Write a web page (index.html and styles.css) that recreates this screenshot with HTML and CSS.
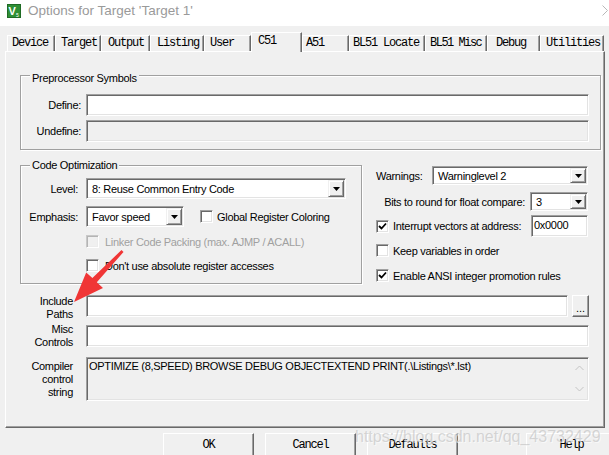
FILE: index.html
```html
<!DOCTYPE html>
<html>
<head>
<meta charset="utf-8">
<title>Options for Target 'Target 1'</title>
<link rel="stylesheet" href="styles.css">
</head>
<body>
<div class="window">
  <div class="titlebar">
    <svg class="app-icon" width="14" height="14" viewBox="0 0 14 14">
      <rect x="0" y="0" width="14" height="14" fill="#2f8f35"/>
      <rect x="0.5" y="0.5" width="13" height="13" fill="none" stroke="#1f6b24"/>
      <text x="1.5" y="11" font-family="Liberation Sans, sans-serif" font-weight="bold" font-size="11" fill="#fff">V</text>
      <text x="9" y="12.5" font-family="Liberation Sans, sans-serif" font-size="5" fill="#fff">5</text>
    </svg>
    <span class="title">Options for Target 'Target 1'</span>
    <svg class="title-chev" width="6" height="11" viewBox="0 0 6 11"><polyline points="0.5,0.5 5.5,5.5 0.5,10.5" fill="none" stroke="#b8b8b8"/></svg>
  </div>

  <div class="tabs">
    <div class="tab t-device">Device</div>
    <div class="tab t-target">Target</div>
    <div class="tab t-output">Output</div>
    <div class="tab t-listing">Listing</div>
    <div class="tab t-user">User</div>
    <div class="tab sel t-c51">C51</div>
    <div class="tab t-a51">A51</div>
    <div class="tab t-bl51l">BL51 Locate</div>
    <div class="tab t-bl51m">BL51 Misc</div>
    <div class="tab t-debug">Debug</div>
    <div class="tab t-util">Utilities</div>
  </div>

  <div class="panel">
    <div class="group g-pre">
      <span class="legend lg-pre">Preprocessor Symbols</span>
      <div class="frow">
        <span class="flabel">Define:</span>
        <div class="edit e-def"></div>
      </div>
      <div class="frow fr-2">
        <span class="flabel">Undefine:</span>
        <div class="edit e-def dis"></div>
      </div>
    </div>

    <div class="mid">
      <div class="group g-opt">
        <span class="legend lg-opt">Code Optimization</span>
        <div class="orow">
          <span class="olabel">Level:</span>
          <div class="combo c-level"><span class="ctext">8: Reuse Common Entry Code</span><span class="cbtn"><svg width="7" height="4" viewBox="0 0 7 4"><polygon points="0,0 7,0 3.5,4" fill="#000"/></svg></span></div>
        </div>
        <div class="orow or-2">
          <span class="olabel">Emphasis:</span>
          <div class="combo c-emph"><span class="ctext">Favor speed</span><span class="cbtn"><svg width="7" height="4" viewBox="0 0 7 4"><polygon points="0,0 7,0 3.5,4" fill="#000"/></svg></span></div>
          <span class="chk chk-grc"></span>
          <span class="clabel">Global Register Coloring</span>
        </div>
        <div class="crow cr-link">
          <span class="chk dis"></span>
          <span class="clabel gray">Linker Code Packing (max. AJMP / ACALL)</span>
        </div>
        <div class="crow cr-dont">
          <span class="chk"></span>
          <span class="clabel">Don't use absolute register accesses</span>
        </div>
      </div>

      <div class="rightcol">
        <div class="rrow rr-warn">
          <span class="wlabel">Warnings:</span>
          <div class="combo c-warn"><span class="ctext">Warninglevel 2</span><span class="cbtn"><svg width="7" height="4" viewBox="0 0 7 4"><polygon points="0,0 7,0 3.5,4" fill="#000"/></svg></span></div>
        </div>
        <div class="rrow rr-bits">
          <span class="blabel2">Bits to round for float compare:</span>
          <div class="combo c-bits"><span class="ctext">3</span><span class="cbtn"><svg width="7" height="4" viewBox="0 0 7 4"><polygon points="0,0 7,0 3.5,4" fill="#000"/></svg></span></div>
        </div>
        <div class="rrow rr-int">
          <span class="chk on"><svg width="9" height="9" viewBox="0 0 9 9"><polyline points="1,4 3.5,6.5 8,1.5" fill="none" stroke="#000" stroke-width="1.8"/></svg></span>
          <span class="clabel">Interrupt vectors at address:</span>
          <div class="edit e-addr">0x0000</div>
        </div>
        <div class="rrow rr-keep">
          <span class="chk"></span>
          <span class="clabel">Keep variables in order</span>
        </div>
        <div class="rrow rr-ansi">
          <span class="chk on"><svg width="9" height="9" viewBox="0 0 9 9"><polyline points="1,4 3.5,6.5 8,1.5" fill="none" stroke="#000" stroke-width="1.8"/></svg></span>
          <span class="clabel">Enable ANSI integer promotion rules</span>
        </div>
      </div>
    </div>

    <div class="brow br-inc">
      <span class="blabel">Include<br>Paths</span>
      <div class="bfield">
        <div class="edit e-inc"></div>
        <div class="dots">...</div>
      </div>
    </div>
    <div class="brow br-misc">
      <span class="blabel">Misc<br>Controls</span>
      <div class="bfield">
        <div class="edit e-misc"></div>
      </div>
    </div>
    <div class="brow br-comp">
      <span class="blabel">Compiler<br>control<br>string</span>
      <div class="bfield">
        <div class="edit e-comp">
          <span class="ctrl-text">OPTIMIZE (8,SPEED) BROWSE DEBUG OBJECTEXTEND PRINT(.\Listings\*.lst)</span>
          <span class="vscroll">
            <svg width="9" height="6" viewBox="0 0 9 6"><polyline points="0.5,5 4.5,1 8.5,5" fill="none" stroke="#c4c4c4"/></svg>
            <svg width="9" height="6" viewBox="0 0 9 6"><polyline points="0.5,1 4.5,5 8.5,1" fill="none" stroke="#c4c4c4"/></svg>
          </span>
        </div>
      </div>
    </div>
  </div>

  <div class="buttons">
    <div class="btn b-ok">OK</div>
    <div class="btn b-cancel">Cancel</div>
    <div class="btn b-def">Defaults</div>
    <div class="btn b-help">Help</div>
  </div>

  <div class="watermark">https://blog.csdn.net/qq_43732429</div>

  <svg class="arrow" width="609" height="455" viewBox="0 0 609 455">
    <polygon points="121.5,250 123.5,252 96.8,282.3 103,288 74,302 86.2,272.4 92.4,278.1" fill="#f03636"/>
  </svg>
</div>
</body>
</html>
```

FILE: styles.css
```css
* { box-sizing: border-box; }
html, body { margin: 0; padding: 0; }
body {
  width: 609px;
  height: 455px;
  overflow: hidden;
  background: #f0f0f0;
  font-family: "Liberation Sans", Arial, sans-serif;
  font-size: 11px;
  letter-spacing: -0.3px;
  color: #000;
}
.window {
  position: relative;
  width: 609px;
  height: 455px;
  overflow: hidden;
  background: #f0f0f0;
}

/* title bar */
.titlebar {
  height: 26px;
  background: #fff;
  display: flex;
  align-items: flex-start;
  padding-top: 4px;
}
.app-icon { margin-left: 7px; flex: none; }
.title {
  margin-left: 7px;
  font-size: 13.5px;
  line-height: 14px;
  letter-spacing: 0;
  color: #9a9a9a;
  white-space: nowrap;
}
.title-chev { margin-left: auto; margin-top: 1px; margin-right: 1px; }

/* tabs */
.tabs {
  height: 25px;
  display: flex;
  align-items: flex-end;
  padding-left: 7px;
  position: relative;
  z-index: 2;
}
.tab {
  flex: none;
  height: 16px;
  background: #f0f0f0;
  border-top: 1px solid #fff;
  border-left: 1px solid #fff;
  border-right: 1px solid #696969;
  box-shadow: inset -1px 0 0 #a0a0a0;
  font-family: "Liberation Mono", "DejaVu Sans Mono", monospace;
  font-size: 12px;
  letter-spacing: -1.2px;
  line-height: 15px;
  white-space: nowrap;
  overflow: hidden;
}
.tab.sel {
  height: 20px;
  margin-bottom: -1px;
  line-height: 17px;
}
.t-device { width: 48px; padding-left: 4px; }
.t-target { width: 46px; padding-left: 5px; }
.t-output { width: 49px; padding-left: 6px; }
.t-listing { width: 54px; padding-left: 6px; }
.t-user { width: 47px; padding-left: 5px; }
.t-c51 { width: 51px; padding-left: 6px; }
.t-a51 { width: 47px; padding-left: 3px; }
.t-bl51l { width: 76px; padding-left: 3px; }
.t-bl51m { width: 62px; padding-left: 4px; letter-spacing: -1.5px; }
.t-debug { width: 53px; padding-left: 8px; }
.t-util { width: 64px; padding-left: 5px; }

/* panel */
.panel {
  margin-left: 5px;
  width: 600px;
  height: 377px;
  border: 1px solid;
  border-color: #fff #696969 #696969 #fff;
  box-shadow: inset -1px -1px 0 #a0a0a0;
  padding: 23px 0 0 14px;
}

/* group boxes */
.group {
  position: relative;
  border: 1px solid #a0a0a0;
  box-shadow: 1px 1px 0 #fff, inset 1px 1px 0 #fff;
}
.legend {
  position: absolute;
  left: 9px;
  padding: 0 2px;
  background: #f0f0f0;
  line-height: 14px;
  white-space: nowrap;
}
.lg-pre { top: -5px; }
.lg-opt { top: -8px; }

.g-pre {
  width: 581px;
  height: 75px;
  padding-top: 18px;
}
.frow { display: flex; align-items: center; }
.fr-2 { margin-top: 4px; }
.flabel {
  width: 60px;
  text-align: right;
  margin-right: 5px;
  flex: none;
}

/* edit boxes */
.edit {
  height: 22px;
  background: #fff;
  border: 1px solid;
  border-color: #a0a0a0 #fff #fff #a0a0a0;
  box-shadow: inset 1px 1px 0 #696969, inset -1px -1px 0 #e3e3e3;
  flex: none;
}
.edit.dis { background: #f0f0f0; }
.e-def { width: 503px; }

/* middle section */
.mid {
  display: flex;
  margin-top: 15px;
}
.g-opt {
  width: 342px;
  height: 119px;
  padding-top: 12px;
  flex: none;
}
.orow { display: flex; align-items: center; }
.or-2 { margin-top: 7px; }
.olabel {
  width: 57px;
  margin-right: 8px;
  text-align: right;
  flex: none;
}

.combo {
  display: flex;
  background: #fff;
  border: 1px solid;
  border-color: #a0a0a0 #fff #fff #a0a0a0;
  box-shadow: inset 1px 1px 0 #696969, inset -1px -1px 0 #e3e3e3;
  padding: 1px;
  flex: none;
}
.ctext {
  flex: 1;
  display: flex;
  align-items: center;
  padding-left: 4px;
  white-space: nowrap;
  overflow: hidden;
}
.cbtn {
  width: 16px;
  flex: none;
  background: #f0f0f0;
  border: 1px solid;
  border-color: #f0f0f0 #696969 #696969 #f0f0f0;
  box-shadow: inset 1px 1px 0 #fff, inset -1px -1px 0 #a0a0a0;
  display: flex;
  align-items: center;
  justify-content: center;
}
.c-level { width: 260px; height: 21px; }
.c-emph { width: 98px; height: 21px; }
.c-warn { width: 156px; height: 19px; }
.c-bits { width: 58px; height: 19px; }

.chk {
  width: 13px;
  height: 13px;
  flex: none;
  background: #fff;
  border: 1px solid;
  border-color: #a0a0a0 #fff #fff #a0a0a0;
  box-shadow: inset 1px 1px 0 #696969, inset -1px -1px 0 #e3e3e3;
  display: flex;
  align-items: center;
  justify-content: center;
}
.chk.dis {
  background: #f0f0f0;
  border-color: #c8c8c8 #fff #fff #c8c8c8;
  box-shadow: inset 1px 1px 0 #b4b4b4, inset -1px -1px 0 #ececec;
}
.chk-grc { margin-left: 16px; }
.clabel { margin-left: 4px; white-space: nowrap; }
.clabel.gray { color: #a0a0a0; }

.crow { display: flex; align-items: center; padding-left: 65px; }
.crow .clabel { margin-left: 6px; }
.cr-link { margin-top: 8px; }
.cr-dont { margin-top: 11px; }

.rightcol {
  width: 226px;
  padding-left: 14px;
  flex: none;
}
.rrow { display: flex; align-items: center; }
.rr-warn { margin-top: 1px; }
.wlabel { width: 56px; flex: none; }
.rr-bits { margin-top: 7px; justify-content: flex-end; }
.blabel2 { margin-right: 5px; white-space: nowrap; }
.rr-int { margin-top: 4px; }
.e-addr {
  width: 57px;
  margin-left: auto;
  padding: 3px 0 0 2px;
  line-height: 13px;
}
.rr-keep { margin-top: 7px; }
.rr-ansi { margin-top: 12px; }

/* bottom rows */
.brow { display: flex; align-items: flex-start; }
.br-inc { margin-top: 11px; }
.br-misc { margin-top: 2px; }
.br-comp { margin-top: 8px; }
.blabel {
  width: 53px;
  text-align: right;
  line-height: 13px;
  flex: none;
}
.br-comp .blabel { margin-top: 3px; }
.bfield {
  margin-left: 13px;
  width: 503px;
  display: flex;
}
.br-misc .bfield { margin-top: 2px; }
.e-inc { width: 482px; }
.dots {
  width: 17px;
  height: 22px;
  margin-left: 4px;
  flex: none;
  background: #f0f0f0;
  border: 1px solid;
  border-color: #fff #696969 #696969 #fff;
  box-shadow: inset -1px -1px 0 #a0a0a0;
  text-align: center;
  line-height: 20px;
  padding-top: 2px;
  letter-spacing: 0;
}
.e-misc { width: 503px; }
.e-comp {
  width: 503px;
  height: 44px;
  background: #f0f0f0;
  display: flex;
}
.ctrl-text {
  flex: 1;
  padding: 2px 0 0 2px;
  line-height: 13px;
  white-space: nowrap;
  overflow: hidden;
}
.vscroll {
  width: 17px;
  flex: none;
  display: flex;
  flex-direction: column;
  align-items: center;
  justify-content: space-between;
  padding: 7px 0 8px;
}

/* bottom buttons */
.buttons {
  display: flex;
  margin-top: 5px;
  padding-left: 163px;
}
.btn {
  width: 91px;
  height: 26px;
  flex: none;
  background: #f0f0f0;
  border: 1px solid;
  border-color: #fff #696969 #696969 #fff;
  box-shadow: inset -1px -1px 0 #a0a0a0;
  text-align: center;
  line-height: 23px;
  font-family: "Liberation Mono", "DejaVu Sans Mono", monospace;
  font-size: 12px;
  letter-spacing: -1.2px;
}
.b-cancel { margin-left: 11px; }
.b-def { margin-left: 11px; }
.b-help { margin-left: 68px; }

/* overlays */
.watermark {
  position: absolute;
  left: 355px;
  top: 428px;
  font-size: 16px;
  line-height: 18px;
  letter-spacing: 0;
  color: rgba(180, 180, 180, 0.5);
  text-shadow: 1px 1px 0 rgba(255, 255, 255, 0.6);
  white-space: nowrap;
}
.arrow {
  position: absolute;
  left: 0;
  top: 0;
  pointer-events: none;
}
```
